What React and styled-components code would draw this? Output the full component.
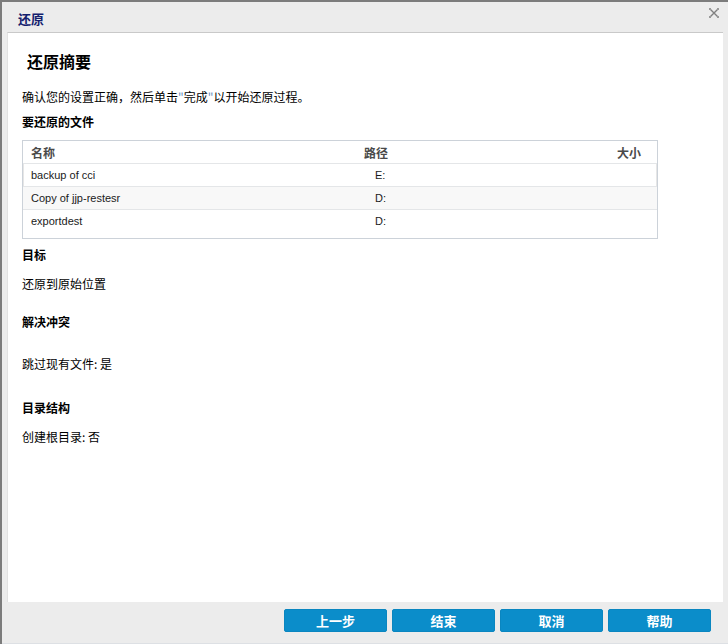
import React from 'react';
import styled, { createGlobalStyle } from 'styled-components';

const GlobalStyle = createGlobalStyle`
  html, body {
    margin: 0;
    padding: 0;
    background: #7c7c7c;
  }
  body {
    font-family: "Liberation Sans", "Noto Sans CJK SC", Arial, sans-serif;
    font-size: 12px;
    color: #111;
  }
`;

const Dialog = styled.div`
  margin: 2px 0 0 2px;
  width: 726px;
  height: 641px;
  background: #ececec;
  border-bottom: 1px solid #dde0e4;
  display: flex;
  flex-direction: column;
`;

const TitleBar = styled.div`
  height: 30px;
  display: flex;
  align-items: center;
  justify-content: space-between;
  padding: 0 7px 0 16px;
`;

const Title = styled.div`
  font-family: "Noto Sans CJK SC", sans-serif;
  font-weight: bold;
  font-size: 13px;
  color: #13206e;
  margin-top: 3px;
`;

const CloseButton = styled.button`
  border: none;
  background: none;
  padding: 0;
  width: 12px;
  height: 12px;
  margin-top: -8px;
  margin-right: 1px;
  cursor: pointer;
  display: flex;
  align-items: center;
  justify-content: center;
`;

const Body = styled.div`
  flex: 1;
  margin: 0 5px;
  background: #fff;
  border-top: 1px solid #c9c9c9;
  border-left: 1px solid #e2e2e2;
  padding: 18px 15px 0 14px;
`;

const Heading = styled.h1`
  margin: 0 0 18px 5px;
  font-family: "Noto Sans CJK SC", sans-serif;
  font-size: 16px;
  line-height: 20px;
  font-weight: bold;
  color: #000;
`;

const Text = styled.div`
  font-family: "Noto Sans CJK SC", sans-serif;
  font-size: 12px;
  line-height: 16px;
  margin-top: ${p => p.$gap || 0}px;
  font-weight: ${p => (p.$bold ? 'bold' : 'normal')};
  color: #000;
`;

const Quote = styled.span`
  color: #6a8fc0;
`;

const Table = styled.div`
  margin-top: 10px;
  width: 634px;
  height: 97px;
  border: 1px solid #ccd2d9;
`;

const Row = styled.div`
  display: grid;
  grid-template-columns: 333px 1fr auto;
  height: 22px;
  align-items: center;
  background: ${p => (p.$alt ? '#f8f8f8' : '#fff')};
  border-bottom: ${p => (p.$last ? 'none' : '1px solid #e4e6e8')};
  box-shadow: ${p => (p.$focus ? 'inset 1px 0 0 #e6e6e6, inset -1px 0 0 #e6e6e6' : 'none')};
`;

const HeadCell = styled.div`
  font-family: "Noto Sans CJK SC", sans-serif;
  font-weight: bold;
  font-size: 12px;
  color: #4a4a4a;
  padding-left: ${p => (p.$right ? 0 : 8)}px;
  padding-right: ${p => (p.$right ? 16 : 0)}px;
`;

const Cell = styled.div`
  font-family: "Liberation Sans", Arial, sans-serif;
  font-size: 11px;
  color: #1a1a1a;
  padding-left: ${p => p.$indent || 8}px;
`;

const Footer = styled.div`
  height: 41px;
  display: flex;
  justify-content: flex-end;
  align-items: flex-start;
  gap: 5px;
  padding: 7px 17px 0 0;
  box-sizing: border-box;
`;

const Button = styled.button`
  width: 103px;
  height: 23px;
  background: #0b8dca;
  border: 1px solid #0a86c0;
  border-radius: 2px;
  color: #fff;
  font-family: "Noto Sans CJK SC", sans-serif;
  font-weight: bold;
  font-size: 13px;
  padding: 0;
  cursor: pointer;
`;

const files = [
  { name: 'backup of cci', path: 'E:', size: '' },
  { name: 'Copy of jjp-restesr', path: 'D:', size: '' },
  { name: 'exportdest', path: 'D:', size: '' },
];

const CloseIcon = () => (
  <svg width="10" height="10" viewBox="0 0 10 10">
    <path d="M1 1L9 9M9 1L1 9" stroke="#808080" strokeWidth="1.4" />
    <path d="M0 0h2v2H0zM8 0h2v2H8zM0 8h2v2H0zM8 8h2v2H8z" fill="#9a9a9a" />
  </svg>
);

export default function App() {
  return (
    <>
      <GlobalStyle />
      <Dialog>
        <TitleBar>
          <Title>还原</Title>
          <CloseButton aria-label="close">
            <CloseIcon />
          </CloseButton>
        </TitleBar>
        <Body>
          <Heading>还原摘要</Heading>
          <Text>
            确认您的设置正确，然后单击<Quote>"</Quote>完成<Quote>"</Quote>以开始还原过程。
          </Text>
          <Text $bold $gap={9}>要还原的文件</Text>
          <Table>
            <Row>
              <HeadCell>名称</HeadCell>
              <HeadCell>路径</HeadCell>
              <HeadCell $right>大小</HeadCell>
            </Row>
            {files.map((f, i) => (
              <Row key={i} $alt={i === 1} $focus={i === 0} $last={i === files.length - 1}>
                <Cell>{f.name}</Cell>
                <Cell $indent={19}>{f.path}</Cell>
                <Cell>{f.size}</Cell>
              </Row>
            ))}
          </Table>
          <Text $bold $gap={8}>目标</Text>
          <Text $gap={13}>还原到原始位置</Text>
          <Text $bold $gap={22}>解决冲突</Text>
          <Text $gap={26}>跳过现有文件: 是</Text>
          <Text $bold $gap={28}>目录结构</Text>
          <Text $gap={13}>创建根目录: 否</Text>
        </Body>
        <Footer>
          <Button>上一步</Button>
          <Button>结束</Button>
          <Button>取消</Button>
          <Button>帮助</Button>
        </Footer>
      </Dialog>
    </>
  );
}
